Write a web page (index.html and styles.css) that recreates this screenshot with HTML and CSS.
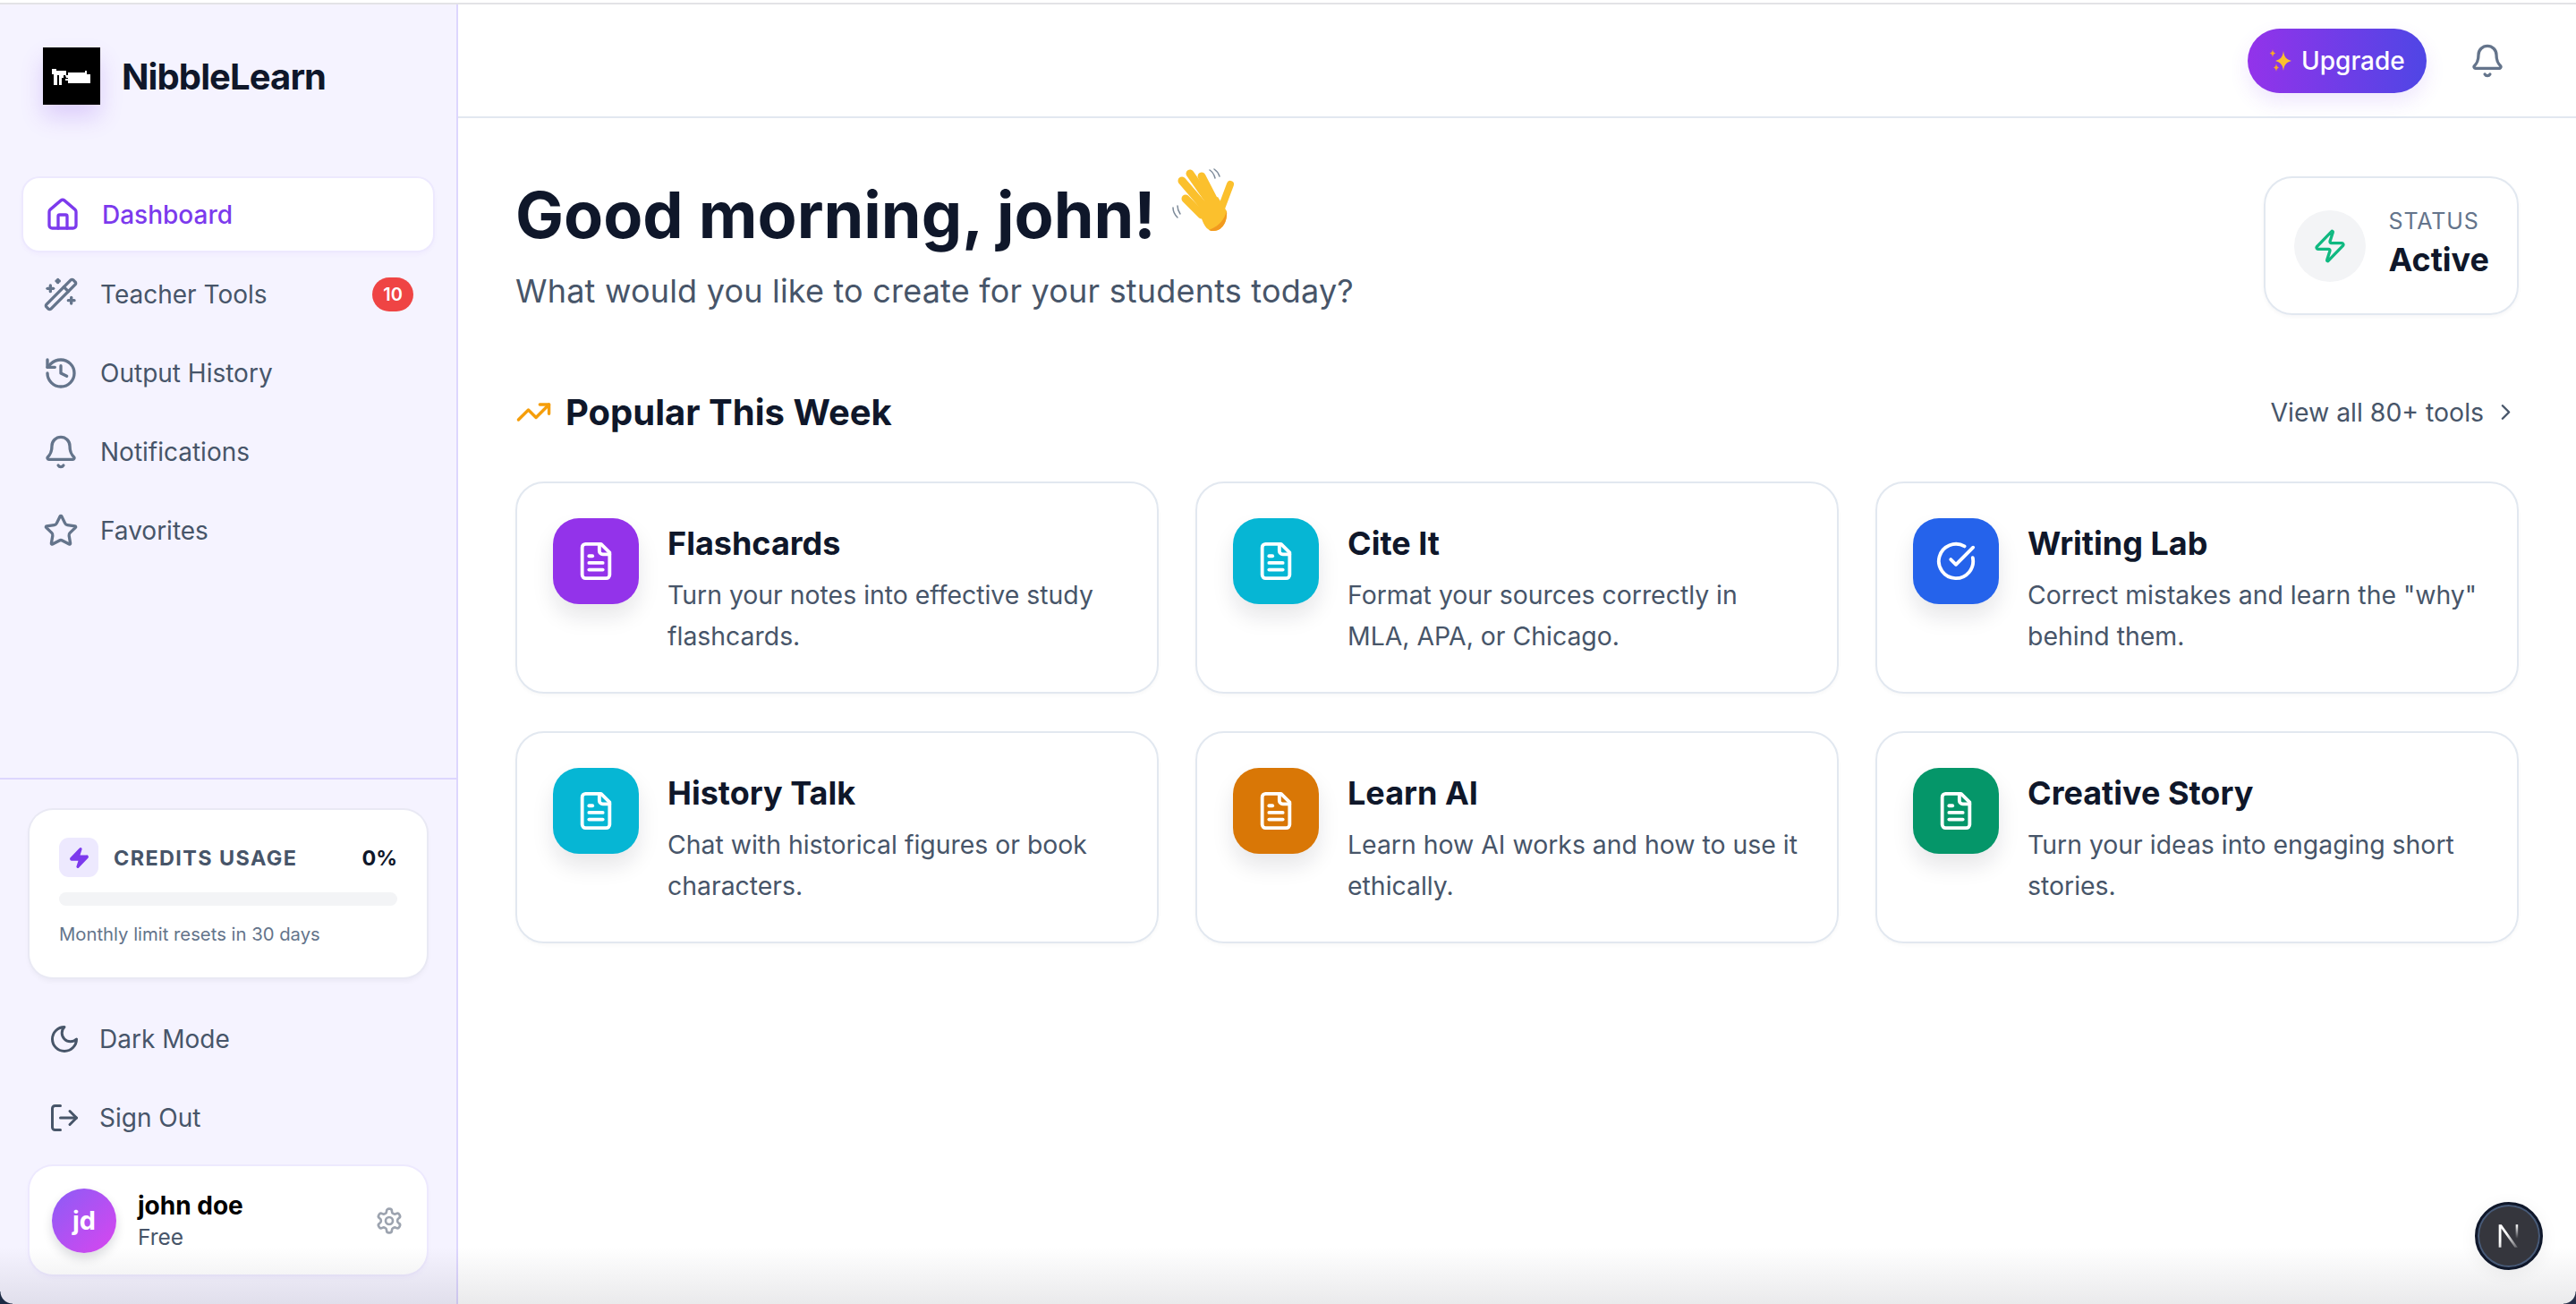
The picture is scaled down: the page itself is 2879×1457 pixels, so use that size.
FILE: index.html
```html
<!DOCTYPE html>
<html lang="en">
<head>
  <meta charset="UTF-8" />
  <title>NibbleLearn Dashboard</title>
  <link rel="stylesheet" href="styles.css">
</head>
<body>
  <svg class="sprite" xmlns="http://www.w3.org/2000/svg">
    <symbol id="i-home" viewBox="0 0 24 24"><path d="M15 21v-8a1 1 0 0 0-1-1h-4a1 1 0 0 0-1 1v8"/><path d="M3 10a2 2 0 0 1 .709-1.528l7-5.999a2 2 0 0 1 2.582 0l7 5.999A2 2 0 0 1 21 10v9a2 2 0 0 1-2 2H5a2 2 0 0 1-2-2z"/></symbol>
    <symbol id="i-wand" viewBox="0 0 24 24"><path d="m21.64 3.64-1.28-1.28a1.21 1.21 0 0 0-1.72 0L2.36 18.64a1.21 1.21 0 0 0 0 1.72l1.28 1.28a1.2 1.2 0 0 0 1.72 0L21.64 5.36a1.2 1.2 0 0 0 0-1.72"/><path d="m14 7 3 3"/><path d="M5 6v4"/><path d="M19 14v4"/><path d="M10 2v2"/><path d="M7 8H3"/><path d="M21 16h-4"/><path d="M11 3H9"/></symbol>
    <symbol id="i-history" viewBox="0 0 24 24"><path d="M3 12a9 9 0 1 0 9-9 9.75 9.75 0 0 0-6.74 2.74L3 8"/><path d="M3 3v5h5"/><path d="M12 7v5l4 2"/></symbol>
    <symbol id="i-bell" viewBox="0 0 24 24"><path d="M10.268 21a2 2 0 0 0 3.464 0"/><path d="M3.262 15.326A1 1 0 0 0 4 17h16a1 1 0 0 0 .74-1.673C19.41 13.956 18 12.499 18 8A6 6 0 0 0 6 8c0 4.499-1.411 5.956-2.738 7.326"/></symbol>
    <symbol id="i-star" viewBox="0 0 24 24"><path d="M11.525 2.295a.53.53 0 0 1 .95 0l2.31 4.679a2.123 2.123 0 0 0 1.595 1.16l5.166.756a.53.53 0 0 1 .294.904l-3.736 3.638a2.123 2.123 0 0 0-.611 1.878l.882 5.14a.53.53 0 0 1-.771.56l-4.618-2.428a2.122 2.122 0 0 0-1.973 0L6.396 21.01a.53.53 0 0 1-.77-.56l.881-5.139a2.122 2.122 0 0 0-.611-1.879L2.16 9.795a.53.53 0 0 1 .294-.906l5.165-.755a2.122 2.122 0 0 0 1.597-1.16z"/></symbol>
    <symbol id="i-zap" viewBox="0 0 24 24"><path d="M4 14a1 1 0 0 1-.78-1.63l9.9-10.2a.5.5 0 0 1 .86.46l-1.92 6.02A1 1 0 0 0 13 10h7a1 1 0 0 1 .78 1.63l-9.9 10.2a.5.5 0 0 1-.86-.46l1.92-6.02A1 1 0 0 0 11 14z"/></symbol>
    <symbol id="i-moon" viewBox="0 0 24 24"><path d="M12 3a6 6 0 0 0 9 9 9 9 0 1 1-9-9Z"/></symbol>
    <symbol id="i-logout" viewBox="0 0 24 24"><path d="M9 21H5a2 2 0 0 1-2-2V5a2 2 0 0 1 2-2h4"/><polyline points="16 17 21 12 16 7"/><line x1="21" x2="9" y1="12" y2="12"/></symbol>
    <symbol id="i-gear" viewBox="0 0 24 24"><path d="M12.22 2h-.44a2 2 0 0 0-2 2v.18a2 2 0 0 1-1 1.73l-.43.25a2 2 0 0 1-2 0l-.15-.08a2 2 0 0 0-2.73.73l-.22.38a2 2 0 0 0 .73 2.73l.15.1a2 2 0 0 1 1 1.72v.51a2 2 0 0 1-1 1.74l-.15.09a2 2 0 0 0-.73 2.73l.22.38a2 2 0 0 0 2.73.73l.15-.08a2 2 0 0 1 2 0l.43.25a2 2 0 0 1 1 1.73V20a2 2 0 0 0 2 2h.44a2 2 0 0 0 2-2v-.18a2 2 0 0 1 1-1.73l.43-.25a2 2 0 0 1 2 0l.15.08a2 2 0 0 0 2.73-.73l.22-.39a2 2 0 0 0-.73-2.73l-.15-.08a2 2 0 0 1-1-1.74v-.5a2 2 0 0 1 1-1.74l.15-.09a2 2 0 0 0 .73-2.73l-.22-.38a2 2 0 0 0-2.73-.73l-.15.08a2 2 0 0 1-2 0l-.43-.25a2 2 0 0 1-1-1.73V4a2 2 0 0 0-2-2z"/><circle cx="12" cy="12" r="3"/></symbol>
    <symbol id="i-trend" viewBox="0 0 24 24"><polyline points="22 7 13.5 15.5 8.5 10.5 2 17"/><polyline points="16 7 22 7 22 13"/></symbol>
    <symbol id="i-chevron" viewBox="0 0 24 24"><path d="m9 18 6-6-6-6"/></symbol>
    <symbol id="i-file" viewBox="0 0 24 24"><path d="M15 2H6a2 2 0 0 0-2 2v16a2 2 0 0 0 2 2h12a2 2 0 0 0 2-2V7Z"/><path d="M14 2v4a2 2 0 0 0 2 2h4"/><path d="M10 9H8"/><path d="M16 13H8"/><path d="M16 17H8"/></symbol>
    <symbol id="i-check" viewBox="0 0 24 24"><path d="M21.801 10A10 10 0 1 1 17 3.335"/><path d="m9 11 3 3L22 4"/></symbol>
  </svg>

  <div class="app">
    <aside class="sidebar">
      <div class="brand">
        <div class="logo">
          <svg viewBox="0 0 44 19" width="44" height="19">
            <path d="M0 1h5v2h11v5h-3v3h-2v8H8V8H6v11H2V7H0zM15 8h3v3h-2zM18 5h19V3h2v4h4v10H18v-3h-3v-2h3z" fill="#fff"/>
          </svg>
        </div>
        <span class="brand-name">NibbleLearn</span>
      </div>

      <nav class="nav">
        <a class="nav-item active"><svg class="icon"><use href="#i-home"/></svg>Dashboard</a>
        <a class="nav-item"><svg class="icon"><use href="#i-wand"/></svg>Teacher Tools<span class="badge">10</span></a>
        <a class="nav-item"><svg class="icon"><use href="#i-history"/></svg>Output History</a>
        <a class="nav-item"><svg class="icon"><use href="#i-bell"/></svg>Notifications</a>
        <a class="nav-item"><svg class="icon"><use href="#i-star"/></svg>Favorites</a>
      </nav>

      <div class="side-bottom">
        <div class="credits">
          <div class="credits-head">
            <span class="credits-icon"><svg><use href="#i-zap"/></svg></span>
            <span class="credits-label">CREDITS USAGE</span>
            <span class="credits-pct">0%</span>
          </div>
          <div class="credits-bar"></div>
          <p class="credits-note">Monthly limit resets in 30 days</p>
        </div>

        <a class="side-link"><svg class="icon-sm"><use href="#i-moon"/></svg>Dark Mode</a>
        <a class="side-link"><svg class="icon-sm"><use href="#i-logout"/></svg>Sign Out</a>

        <div class="user-card">
          <div class="avatar">jd</div>
          <div class="user-info">
            <div class="user-name">john doe</div>
            <div class="user-plan">Free</div>
          </div>
          <svg class="gear"><use href="#i-gear"/></svg>
        </div>
      </div>
    </aside>

    <main class="main">
      <header class="topbar">
        <button class="upgrade">
          <svg class="sparkles" viewBox="0 0 26 28" width="26" height="28">
            <path d="M16 3c1 7 3 9 9 11-6 2-8 4-9 11-1-7-3-9-9-11 6-2 8-4 9-11z" fill="#fbc02d"/>
            <path d="M4 1c.4 3 1 3.600 3.500 4.500C5 6.400 4.400 7 4 10c-.4-3-1-3.600-3.500-4.500C3 4.600 3.600 4 4 1z" fill="#f9a825"/>
            <path d="M8 17c.4 3 1 3.600 3 4.500-2 .9-2.600 1.500-3 4.500-.4-3-1-3.600-3-4.500 2-.9 2.600-1.500 3-4.500z" fill="#f9a825"/>
          </svg>
          Upgrade
        </button>
        <button class="bell-btn"><svg class="icon"><use href="#i-bell"/></svg></button>
      </header>

      <div class="content">
        <section class="hero">
          <div>
            <h1 class="hero-title">Good morning, john!
              <svg class="wave" viewBox="0 0 72 70" width="72" height="70">
                <g fill="none" stroke="#7d8a99" stroke-width="1.500" stroke-linecap="round">
                  <path d="M2 44c0 4 2 8 5 11"/><path d="M7 42c0 3 1 6 3 9"/>
                  <path d="M43 2c3 2 5 5 6 9"/><path d="M48 1c3 2 5 5 6 8"/>
                </g>
                <g fill="none" stroke="#fbc02d" stroke-linecap="round">
                  <path d="M54 50l12-32" stroke-width="8"/>
                  <path d="M34 52L16 34" stroke-width="9"/>
                  <path d="M36 42L12 14" stroke-width="9"/>
                  <path d="M42 36L21 6" stroke-width="9"/>
                  <path d="M48 36L34 9" stroke-width="9"/>
                </g>
                <path d="M30 40l22-8 10 16c1 12-5 22-15 22-8 0-13-8-17-30z" fill="#fbc02d"/>
                <path d="M47 70c10 0 16-10 15-22-3 10-9 17-20 21 2 1 3 1 5 1z" fill="#f29a1f"/>
              </svg>
            </h1>
            <p class="hero-sub">What would you like to create for your students today?</p>
          </div>
          <div class="status">
            <span class="status-icon"><svg><use href="#i-zap"/></svg></span>
            <div>
              <div class="status-label">STATUS</div>
              <div class="status-value">Active</div>
            </div>
          </div>
        </section>

        <div class="section-head">
          <h2 class="section-title"><svg class="trend"><use href="#i-trend"/></svg>Popular This Week</h2>
          <a class="view-all">View all 80+ tools<svg class="chevron"><use href="#i-chevron"/></svg></a>
        </div>

        <section class="tools">
          <article class="tool">
            <span class="tool-icon purple"><svg><use href="#i-file"/></svg></span>
            <div>
              <h3>Flashcards</h3>
              <p>Turn your notes into effective study flashcards.</p>
            </div>
          </article>
          <article class="tool">
            <span class="tool-icon cyan"><svg><use href="#i-file"/></svg></span>
            <div>
              <h3>Cite It</h3>
              <p>Format your sources correctly in MLA, APA, or Chicago.</p>
            </div>
          </article>
          <article class="tool">
            <span class="tool-icon blue"><svg><use href="#i-check"/></svg></span>
            <div>
              <h3>Writing Lab</h3>
              <p>Correct mistakes and learn the "why" behind them.</p>
            </div>
          </article>
          <article class="tool">
            <span class="tool-icon cyan"><svg><use href="#i-file"/></svg></span>
            <div>
              <h3>History Talk</h3>
              <p>Chat with historical figures or book characters.</p>
            </div>
          </article>
          <article class="tool">
            <span class="tool-icon orange"><svg><use href="#i-file"/></svg></span>
            <div>
              <h3>Learn AI</h3>
              <p>Learn how AI works and how to use it ethically.</p>
            </div>
          </article>
          <article class="tool">
            <span class="tool-icon green"><svg><use href="#i-file"/></svg></span>
            <div>
              <h3>Creative Story</h3>
              <p>Turn your ideas into engaging short stories.</p>
            </div>
          </article>
        </section>
      </div>
    </main>
  </div>

  <div class="bottom-fade"></div>
  <div class="corner corner-left"></div>
  <div class="corner corner-right"></div>
  <div class="dev-badge">
    <svg viewBox="0 0 24 24" width="34" height="34">
      <defs>
        <linearGradient id="n-fade" x1="0" y1="0" x2="1" y2="1"><stop offset="0.4" stop-color="#fff"/><stop offset="1" stop-color="#fff" stop-opacity="0.2"/></linearGradient>
        <linearGradient id="n-fade2" x1="0" y1="0" x2="0" y2="1"><stop offset="0" stop-color="#fff"/><stop offset="1" stop-color="#fff" stop-opacity="0"/></linearGradient>
      </defs>
      <path d="M4 3h2.200L19 21h-2.400L6 6v15H4z" fill="url(#n-fade)"/>
      <rect x="17.400" y="3" width="1.800" height="11" fill="url(#n-fade2)"/>
    </svg>
  </div>
</body>
</html>
```

FILE: styles.css
```css
* {
  margin: 0;
  padding: 0;
  box-sizing: border-box;
}

html, body {
  height: 100%;
  overflow: hidden;
}

body {
  position: relative;
  font-family: "Inter", "Liberation Sans", sans-serif;
  background-color: #fff;
  color: #0f172a;
  padding-top: 3px;
}

.sprite {
  display: none;
}

svg {
  fill: none;
  stroke-linecap: round;
  stroke-linejoin: round;
}

.app {
  display: flex;
  height: 1454px;
  border-top: 2px solid #e3e3e6;
}

/* sidebar */
.sidebar {
  display: flex;
  flex-direction: column;
  width: 512px;
  flex-shrink: 0;
  background-color: #f5f3ff;
  border-right: 2px solid #ddd6fe;
}

.brand {
  display: flex;
  align-items: center;
  gap: 24px;
  padding: 48px 48px 0;
}

.logo {
  display: flex;
  align-items: center;
  justify-content: center;
  width: 64px;
  height: 64px;
  background-color: #000;
  box-shadow: 0 14px 26px rgba(124, 58, 237, 0.2);
}

.brand-name {
  font-size: 40px;
  font-weight: 700;
  letter-spacing: -0.9px;
}

.nav {
  display: flex;
  flex-direction: column;
  gap: 8px;
  margin: 82px 26px 0;
}

.nav-item {
  display: flex;
  align-items: center;
  gap: 24px;
  height: 80px;
  padding: 0 22px;
  border-radius: 18px;
  font-size: 28px;
  color: #475569;
}

.nav-item.active {
  height: 81px;
  margin-bottom: 1px;
  padding-left: 24px;
  background-color: #fff;
  color: #7c3aed;
  font-weight: 500;
  box-shadow: 0 0 0 2px #ede9fe, 0 3px 6px rgba(124, 58, 237, 0.06);
}

.icon {
  width: 40px;
  height: 40px;
  stroke: currentColor;
  stroke-width: 2;
  flex-shrink: 0;
}

.nav-item:not(.active) .icon {
  stroke: #64748b;
}

.badge {
  margin-left: auto;
  width: 46px;
  height: 38px;
  border-radius: 19px;
  background-color: #ef4444;
  color: #fff;
  font-size: 20px;
  font-weight: 600;
  line-height: 38px;
  text-align: center;
}

.side-bottom {
  margin-top: auto;
  padding: 34px 33px 33px;
  border-top: 2px solid #ddd6fe;
}

.credits {
  padding: 31px 33px 0;
  height: 187px;
  background-color: #fff;
  border-radius: 26px;
  box-shadow: 0 0 0 2px #e9e9f4, 0 4px 6px rgba(15, 23, 42, 0.05);
}

.credits-head {
  display: flex;
  align-items: center;
}

.credits-icon {
  display: flex;
  align-items: center;
  justify-content: center;
  width: 44px;
  height: 44px;
  border-radius: 11px;
  background-color: #ede9fe;
}

.credits-icon svg {
  width: 25px;
  height: 25px;
  fill: #7c3aed;
  stroke: #7c3aed;
  stroke-width: 2;
}

.credits-label {
  margin-left: 17px;
  font-size: 23.400px;
  font-weight: 700;
  letter-spacing: 1.400px;
  color: #475569;
}

.credits-pct {
  margin-left: auto;
  font-size: 23.400px;
  font-weight: 700;
}

.credits-bar {
  height: 15px;
  margin-top: 17px;
  border-radius: 8px;
  background-color: #f3f4f6;
}

.credits-note {
  margin-top: 18px;
  font-size: 20.300px;
  line-height: 28px;
  color: #64748b;
}

.side-link {
  display: flex;
  align-items: center;
  gap: 21px;
  height: 80px;
  padding-left: 21px;
  font-size: 28px;
  color: #475569;
}

.side-link:first-of-type {
  margin-top: 29px;
}

.side-link + .side-link {
  margin-top: 8px;
}

.icon-sm {
  width: 36px;
  height: 36px;
  stroke: #475569;
  stroke-width: 2;
}

.user-card {
  display: flex;
  align-items: center;
  height: 121px;
  margin-top: 14px;
  padding: 0 26px 0 25px;
  background-color: #fff;
  border-radius: 26px;
  box-shadow: 0 0 0 2px #ede9fe, 0 3px 6px rgba(124, 58, 237, 0.05);
}

.avatar {
  display: flex;
  align-items: center;
  justify-content: center;
  width: 72px;
  height: 72px;
  border-radius: 50%;
  background: linear-gradient(135deg, #8b5cf6, #d946ef);
  color: #fff;
  font-size: 28.800px;
  font-weight: 700;
  box-shadow: 0 6px 12px rgba(15, 23, 42, 0.15);
}

.user-info {
  margin-left: 24px;
}

.user-name {
  font-size: 28px;
  font-weight: 700;
  line-height: 36px;
  color: #000;
}

.user-plan {
  margin-top: 1px;
  font-size: 24.500px;
  line-height: 33px;
  color: #475569;
}

.gear {
  width: 32px;
  height: 32px;
  margin-left: auto;
  stroke: #9ca3af;
  stroke-width: 2;
}

/* main */
.main {
  flex: 1;
  min-width: 0;
}

.topbar {
  display: flex;
  align-items: center;
  justify-content: flex-end;
  gap: 32px;
  height: 127px;
  padding: 0 63px 0 0;
  border-bottom: 2px solid #e2e8f0;
}

.upgrade {
  display: flex;
  align-items: center;
  gap: 10px;
  width: 200px;
  height: 72px;
  padding-left: 24px;
  border: none;
  border-radius: 36px;
  background: linear-gradient(90deg, #9333ea, #4f46e5);
  color: #fff;
  font-family: inherit;
  font-size: 28px;
  font-weight: 500;
  box-shadow: 0 10px 22px rgba(124, 58, 237, 0.12);
}

.sparkles {
  flex-shrink: 0;
}

.bell-btn {
  display: flex;
  align-items: center;
  justify-content: center;
  width: 72px;
  height: 72px;
  border: none;
  background: none;
  color: #64748b;
}

.content {
  padding: 65px 64px 0 64px;
}

.hero {
  display: flex;
  justify-content: space-between;
  align-items: flex-start;
}

.hero-title {
  font-size: 72px;
  font-weight: 700;
  line-height: 86px;
  position: relative;
}

.wave {
  position: absolute;
  left: 733px;
  top: -9px;
}

.hero-sub {
  margin-top: 17px;
  font-size: 36px;
  line-height: 50px;
  letter-spacing: 0.2px;
  color: #475569;
}

.status {
  display: flex;
  align-items: center;
  gap: 25px;
  height: 155px;
  padding: 0 31px 0 32px;
  margin-left: 3px;
  border: 2px solid #e2e8f0;
  border-radius: 32px;
  box-shadow: 0 2px 4px rgba(15, 23, 42, 0.04);
}

.status-icon {
  display: flex;
  align-items: center;
  justify-content: center;
  width: 80px;
  height: 80px;
  border-radius: 50%;
  background-color: #f3f4f6;
}

.status-icon svg {
  width: 40px;
  height: 40px;
  stroke: #10b981;
  stroke-width: 2;
}

.status-label {
  margin-top: -5px;
  font-size: 25px;
  line-height: 34px;
  letter-spacing: 0.9px;
  color: #64748b;
}

.status-value {
  margin-top: 1px;
  font-size: 36px;
  font-weight: 700;
  line-height: 50px;
}

.section-head {
  display: flex;
  align-items: center;
  justify-content: space-between;
  height: 50px;
  margin-top: 83px;
  margin-bottom: 53px;
}

.section-title {
  display: flex;
  align-items: center;
  gap: 15px;
  font-size: 40px;
  font-weight: 700;
}

.trend {
  width: 41px;
  height: 41px;
  margin-left: 0;
  stroke: #f59e0b;
  stroke-width: 2;
}

.view-all {
  display: flex;
  align-items: center;
  gap: 10px;
  font-size: 28.400px;
  color: #475569;
}

.chevron {
  width: 29px;
  height: 29px;
  stroke: #475569;
  stroke-width: 2;
}

.tools {
  display: grid;
  grid-template-columns: repeat(3, 1fr);
  gap: 42px 41px;
}

.tool {
  display: flex;
  gap: 32px;
  height: 237px;
  padding: 39px 39px 39px 40px;
  border: 2px solid #e2e8f0;
  border-radius: 32px;
  box-shadow: 0 2px 4px rgba(15, 23, 42, 0.03);
}

.tool-icon {
  display: flex;
  align-items: center;
  justify-content: center;
  flex-shrink: 0;
  width: 96px;
  height: 96px;
  border-radius: 29px;
  box-shadow: 0 14px 24px rgba(15, 23, 42, 0.1);
}

.tool-icon svg {
  width: 46px;
  height: 46px;
  stroke: #fff;
  stroke-width: 2;
}

.purple { background-color: #9333ea; }
.cyan { background-color: #06b6d4; }
.blue { background-color: #2563eb; }
.orange { background-color: #d97706; }
.green { background-color: #059669; }

.tool h3 {
  margin-top: 3px;
  font-size: 36px;
  font-weight: 700;
  line-height: 50px;
}

.tool p {
  margin-top: 10px;
  font-size: 28.400px;
  line-height: 45.500px;
  color: #475569;
}

/* things lying over the page */
.bottom-fade {
  position: absolute;
  left: 0;
  right: 0;
  bottom: 0;
  height: 64px;
  background: linear-gradient(rgba(20, 20, 40, 0), rgba(20, 20, 40, 0.09));
  pointer-events: none;
}

.corner {
  position: absolute;
  bottom: 0;
  width: 14px;
  height: 14px;
}

.corner-left {
  left: 0;
  background: radial-gradient(circle at 100% 0, transparent 13px, #1c2a44 14px);
}

.corner-right {
  right: 0;
  background: radial-gradient(circle at 0 0, transparent 13px, #27304a 14px);
}

.dev-badge {
  position: absolute;
  left: 2766px;
  top: 1343px;
  display: flex;
  align-items: center;
  justify-content: center;
  width: 76px;
  height: 76px;
  border-radius: 50%;
  background-color: #35363d;
  border: 3px solid #0f172a;
  box-shadow: inset 0 0 0 2px #475a78, 0 4px 20px rgba(0, 0, 0, 0.06);
}
```
